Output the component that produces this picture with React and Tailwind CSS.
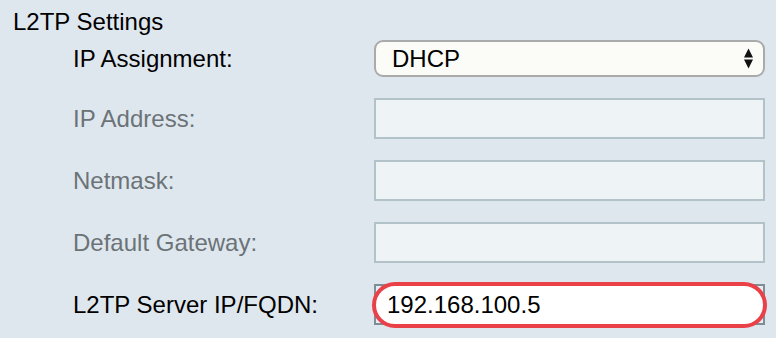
export default function App() {
  const font = { fontFamily: '"Liberation Sans", Arial, Helvetica, sans-serif' };
  const Disabled = ({ label }) => (
    <div className="flex items-center h-[41px]">
      <div className="w-[301px] text-[24px] leading-[28px] text-[#6b7377]">{label}</div>
      <div className="w-[391px] h-[41px] border-2 border-[#b3c1c9] bg-[#eef3f6]" />
    </div>
  );
  return (
    <div className="w-[776px] h-[338px] bg-[#dfe7ee] overflow-hidden" style={font}>
      <div className="pt-[8px] pl-[13px] text-[24px] leading-[28px] text-black">L2TP Settings</div>
      <div className="pl-[73px] mt-[4px] flex flex-col">
        <div className="flex items-center h-[37px]">
          <div className="w-[301px] text-[24px] leading-[28px] text-black">IP Assignment:</div>
          <div className="relative w-[391px] h-[37px] rounded-[9px] border-2 border-[#a9abab] bg-[#fbfbf8] flex items-center pl-[16px]">
            <span className="text-[24px] leading-[28px] text-black">DHCP</span>
            <svg className="absolute right-[10px] top-[6px]" width="9" height="21" viewBox="0 0 9 21">
              <path d="M4.5 0.5 L9 9.5 L0 9.5 Z" fill="#111" />
              <path d="M0 11.5 L9 11.5 L4.5 20.5 Z" fill="#111" />
            </svg>
          </div>
        </div>
        <div className="flex flex-col gap-[21px] mt-[21px]">
          <Disabled label="IP Address:" />
          <Disabled label="Netmask:" />
          <Disabled label="Default Gateway:" />
          <div className="flex items-center h-[41px]">
            <div className="w-[301px] text-[24px] leading-[28px] text-black">L2TP Server IP/FQDN:</div>
            <div className="relative w-[391px] h-[41px] border-2 border-[#7f8d96] bg-[#e6edf2]">
              <div className="absolute -left-[4px] -right-[4px] -top-[4px] -bottom-[5px] rounded-full border-4 border-[#ea4148] bg-white flex items-center pl-[11px]">
                <span className="text-[24px] leading-[28px] text-black">192.168.100.5</span>
              </div>
            </div>
          </div>
        </div>
      </div>
    </div>
  );
}
